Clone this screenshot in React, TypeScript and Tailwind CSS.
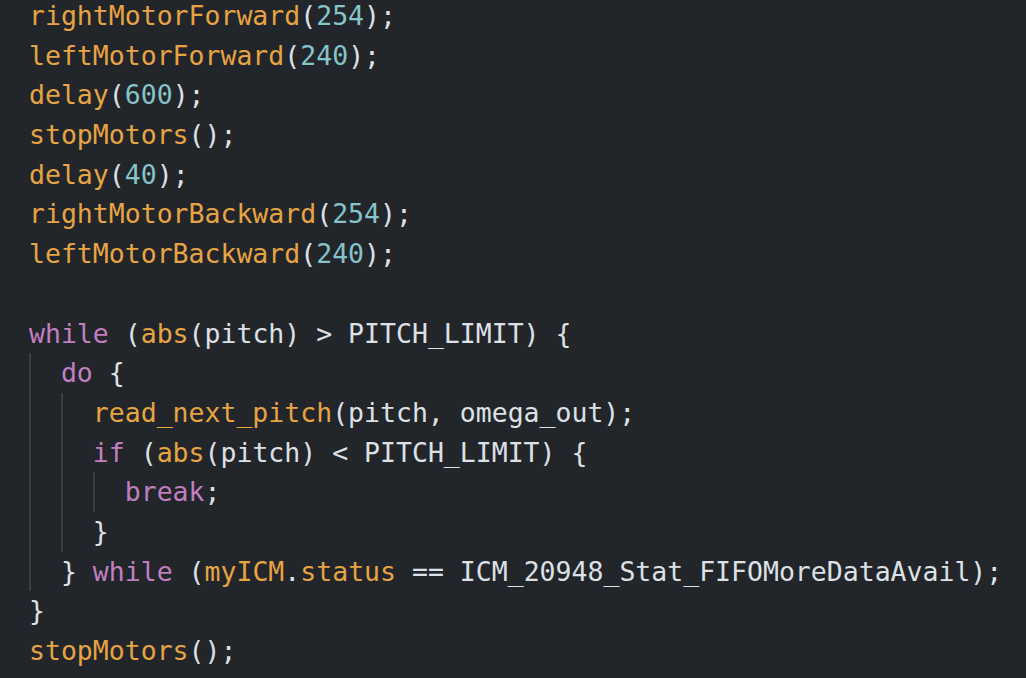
import React from "react";

type Tok = [string, string];

const F = "text-[#e6a443]"; // function / property
const N = "text-[#85c4c8]"; // numbers
const K = "text-[#c17fc1]"; // keywords
const P = "text-[#dde1e6]"; // plain

type Line = { indent: number; guides: number; toks: Tok[] };

const lines: Line[] = [
  { indent: 0, guides: 0, toks: [[F, "rightMotorForward"], [P, "("], [N, "254"], [P, ");"]] },
  { indent: 0, guides: 0, toks: [[F, "leftMotorForward"], [P, "("], [N, "240"], [P, ");"]] },
  { indent: 0, guides: 0, toks: [[F, "delay"], [P, "("], [N, "600"], [P, ");"]] },
  { indent: 0, guides: 0, toks: [[F, "stopMotors"], [P, "();"]] },
  { indent: 0, guides: 0, toks: [[F, "delay"], [P, "("], [N, "40"], [P, ");"]] },
  { indent: 0, guides: 0, toks: [[F, "rightMotorBackward"], [P, "("], [N, "254"], [P, ");"]] },
  { indent: 0, guides: 0, toks: [[F, "leftMotorBackward"], [P, "("], [N, "240"], [P, ");"]] },
  { indent: 0, guides: 0, toks: [] },
  {
    indent: 0,
    guides: 0,
    toks: [[K, "while"], [P, " ("], [F, "abs"], [P, "(pitch) > PITCH_LIMIT) {"]],
  },
  { indent: 1, guides: 1, toks: [[K, "do"], [P, " {"]] },
  { indent: 2, guides: 2, toks: [[F, "read_next_pitch"], [P, "(pitch, omega_out);"]] },
  {
    indent: 2,
    guides: 2,
    toks: [[K, "if"], [P, " ("], [F, "abs"], [P, "(pitch) < PITCH_LIMIT) {"]],
  },
  { indent: 3, guides: 3, toks: [[K, "break"], [P, ";"]] },
  { indent: 2, guides: 2, toks: [[P, "}"]] },
  {
    indent: 1,
    guides: 1,
    toks: [
      [P, "} "],
      [K, "while"],
      [P, " ("],
      [F, "myICM"],
      [P, "."],
      [F, "status"],
      [P, " == ICM_20948_Stat_FIFOMoreDataAvail);"],
    ],
  },
  { indent: 0, guides: 0, toks: [[P, "}"]] },
  { indent: 0, guides: 0, toks: [[F, "stopMotors"], [P, "();"]] },
];

export default function App() {
  return (
    <div className="w-[1026px] h-[678px] overflow-hidden bg-[#22262b]">
      <div
        className="mt-[-4px] pl-[29px] text-[26.5px] leading-[39.7px] whitespace-pre"
        style={{ fontFamily: '"DejaVu Sans Mono", "Liberation Mono", monospace' }}
      >
        {lines.map((ln, i) => (
          <div key={i} className="flex h-[39.7px]">
            {Array.from({ length: ln.indent }).map((_, g) => (
              <span
                key={g}
                className={
                  g < ln.guides
                    ? "w-[2ch] shrink-0 border-l-2 border-[#3a3e44]"
                    : "w-[2ch] shrink-0"
                }
              />
            ))}
            <span>
              {ln.toks.map((t, j) => (
                <span key={j} className={t[0]}>
                  {t[1]}
                </span>
              ))}
              {ln.toks.length === 0 ? " " : null}
            </span>
          </div>
        ))}
      </div>
    </div>
  );
}
